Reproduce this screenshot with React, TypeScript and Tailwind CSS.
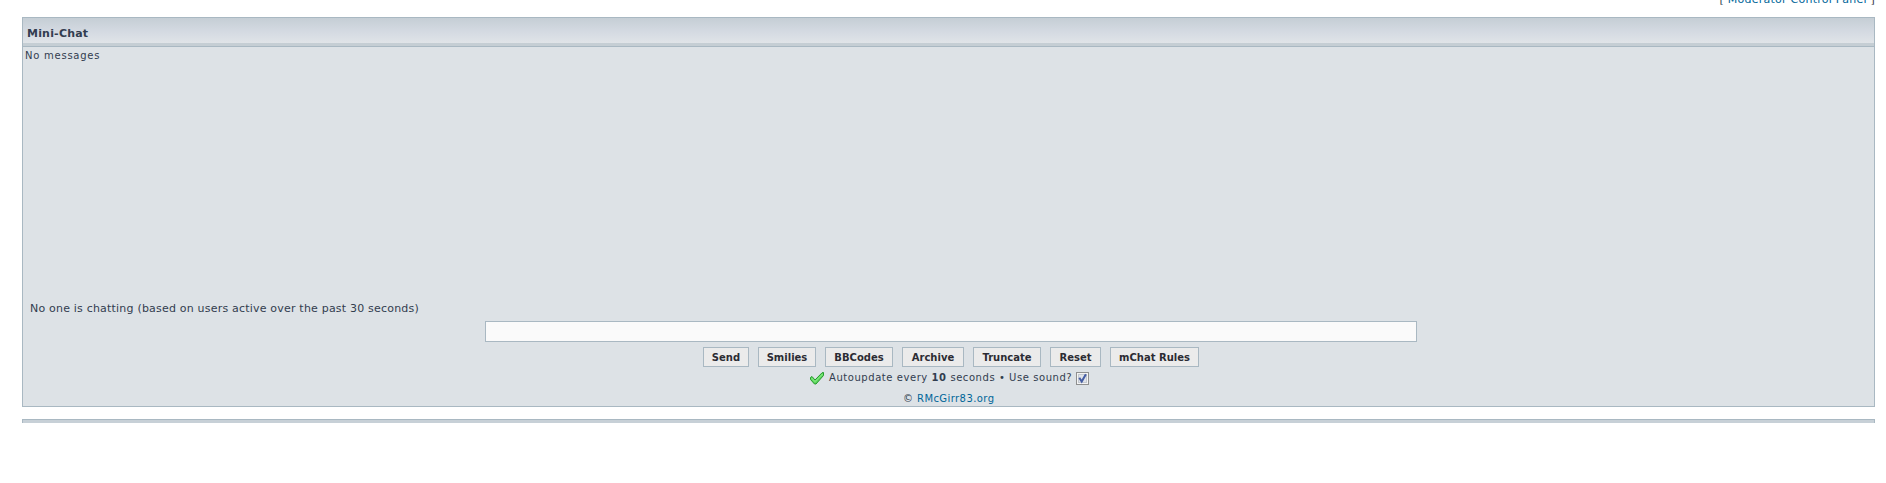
import React from "react";

const line = "block whitespace-nowrap";
const buttons = [
  { label: "Send", size: "w-[46px]" },
  { label: "Smilies", size: "w-[58px]" },
  { label: "BBCodes", size: "w-[68px]" },
  { label: "Archive", size: "w-[62px]" },
  { label: "Truncate", size: "w-[68px]" },
  { label: "Reset", size: "w-[51px]" },
  { label: "mChat Rules", size: "w-[89px]" },
];

function GreenCheck() {
  return (
    <svg className="mr-[5px] h-[13px] w-[14px] shrink-0" viewBox="0 0 14 13">
      <path d="M.5 5.5 2 4.5 5 8 12 .8 13.5.5V3.5L6 12H4.5L.5 7.5Z" fill="#5fd65f" stroke="#249a2c" strokeWidth="1" />
      <path d="M1.5 6 5 9.6 12.6 2" fill="none" stroke="#8df08a" strokeWidth="1" />
    </svg>
  );
}

function SoundCheckbox() {
  return (
    <svg className="ml-[4px] h-[13px] w-[13px] shrink-0" viewBox="0 0 13 13">
      <rect x=".5" y=".5" width="12" height="12" fill="#f4f4f4" stroke="#8e8f8f" />
      <rect x="2.5" y="2.5" width="8" height="8" fill="#dfe3e9" stroke="#c4c9d0" />
      <path d="M3.3 5.8 5.7 9.6 9.9 2.2" fill="none" stroke="#455da3" strokeWidth="2" />
    </svg>
  );
}

export default function App() {
  return (
    <div className="flex h-[483px] w-[1886px] flex-col overflow-hidden bg-white pl-[22px] pr-[11px] font-['DejaVu_Sans',Verdana,sans-serif] text-[#323d4f]">
      <div className="flex h-[17px] shrink-0 justify-end">
        <span className={`${line} -mt-[7px] h-[14px] text-[11px] leading-[14px] tracking-[0.25px]`}>
          [ <a className="text-[#006699]">Moderator Control Panel</a> ]
        </span>
      </div>
      <section className="flex h-[390px] shrink-0 flex-col border border-[#a9b8c2] bg-[#dde2e6]">
        <h2 className="flex h-[25px] shrink-0 items-center bg-linear-to-b from-[#c5ced5] via-[#d3d9e1] to-[#e0e4e8] pl-1 pt-[6px] text-[11px] font-bold leading-[14px] tracking-[0.2px]">
          Mini-Chat
        </h2>
        <div className="h-1 shrink-0 border-b border-[#a9b8c2] bg-[#c5ced4]" />
        <div className="h-[255px] shrink-0 pl-[2px] pt-[2px] text-[10px] leading-[14px] tracking-[0.75px]">No messages</div>
        <div className="h-[19px] shrink-0 pl-[7px] text-[11px] leading-[14px] tracking-[0.2px]">
          No one is chatting (based on users active over the past 30 seconds)
        </div>
        <input className="ml-[462px] h-[21px] w-[932px] shrink-0 border border-[#a9b8c2] bg-[#fafafa] px-1 text-[11px] outline-none" />
        <div className="ml-[680px] mt-[5px] flex h-[20px] shrink-0 gap-[9px]">
          {buttons.map((b) => (
            <button key={b.label} className={`${b.size} flex h-[20px] shrink-0 items-center justify-center whitespace-nowrap border border-[#a9b8c2] bg-[#ebebeb] pt-[2px] text-[10px] font-bold leading-[14px] text-[#2b2b33]`}>
              {b.label}
            </button>
          ))}
        </div>
        <div className="ml-[787px] mt-[5px] flex h-[13px] shrink-0 items-start text-[10px] leading-[13px]">
          <GreenCheck />
          <span className={`${line} -mt-px w-[243px] tracking-[0.56px]`}>Autoupdate every <b>10</b> seconds • Use sound?</span>
          <SoundCheckbox />
        </div>
        <div className="ml-[880px] mt-[7px] h-[14px] shrink-0 whitespace-nowrap text-[10px] leading-[14px] tracking-[0.42px]">
          © <a className="text-[#006699]">RMcGirr83.org</a>
        </div>
      </section>
      <div className="mt-3 h-1 shrink-0 border-x border-t border-[#a9b8c2] bg-[#c7d0d7]" />
    </div>
  );
}
